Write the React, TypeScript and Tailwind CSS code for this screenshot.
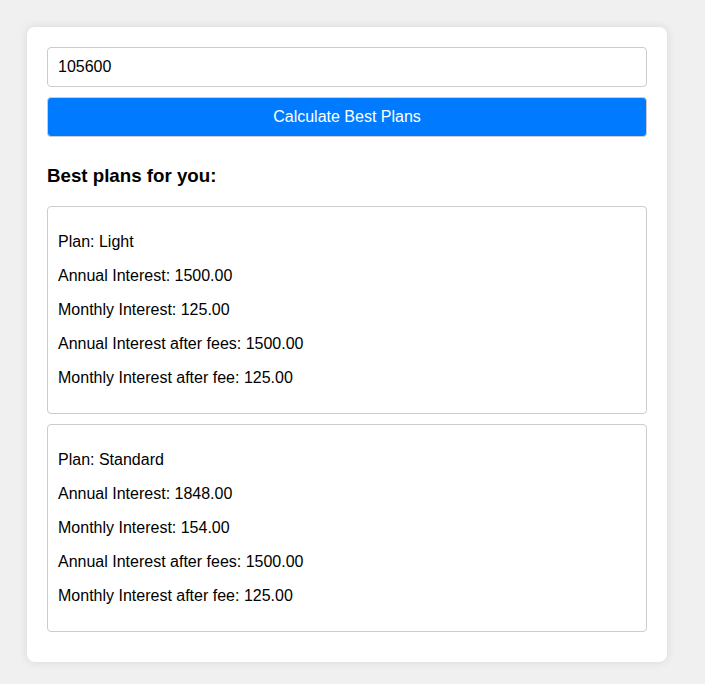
import { useState } from "react";

const plans = [
  { name: "Light", annual: "1500.00", monthly: "125.00", annualFees: "1500.00", monthlyFees: "125.00" },
  { name: "Standard", annual: "1848.00", monthly: "154.00", annualFees: "1500.00", monthlyFees: "125.00" },
];

export default function App() {
  const [amount, setAmount] = useState("105600");

  return (
    <div className="min-h-[684px] bg-[#f0f0f0] pt-[27px] pl-[27px] font-['Liberation_Sans',Arial,sans-serif] text-black">
      <div className="w-[640px] rounded-lg bg-white p-5 shadow-[0_0_10px_rgba(0,0,0,0.1)]">
        <input
          value={amount}
          onChange={(e) => setAmount(e.target.value)}
          className="mb-[10px] block h-10 w-full rounded border border-[#ccc] px-[10px] text-base outline-none"
        />
        <button className="block h-10 w-full rounded border border-[#ccc] bg-[#007bff] text-base text-white">
          Calculate Best Plans
        </button>

        <h3 className="mt-[28px] mb-[19px] text-[18.72px] font-bold leading-[21.5px]">Best plans for you:</h3>

        {plans.map((p) => (
          <div key={p.name} className="mb-[10px] rounded border border-[#ccc] p-[10px] text-base leading-[18px]">
            <p className="my-4">Plan: {p.name}</p>
            <p className="my-4">Annual Interest: {p.annual}</p>
            <p className="my-4">Monthly Interest: {p.monthly}</p>
            <p className="my-4">Annual Interest after fees: {p.annualFees}</p>
            <p className="my-4">Monthly Interest after fee: {p.monthlyFees}</p>
          </div>
        ))}
      </div>
    </div>
  );
}
